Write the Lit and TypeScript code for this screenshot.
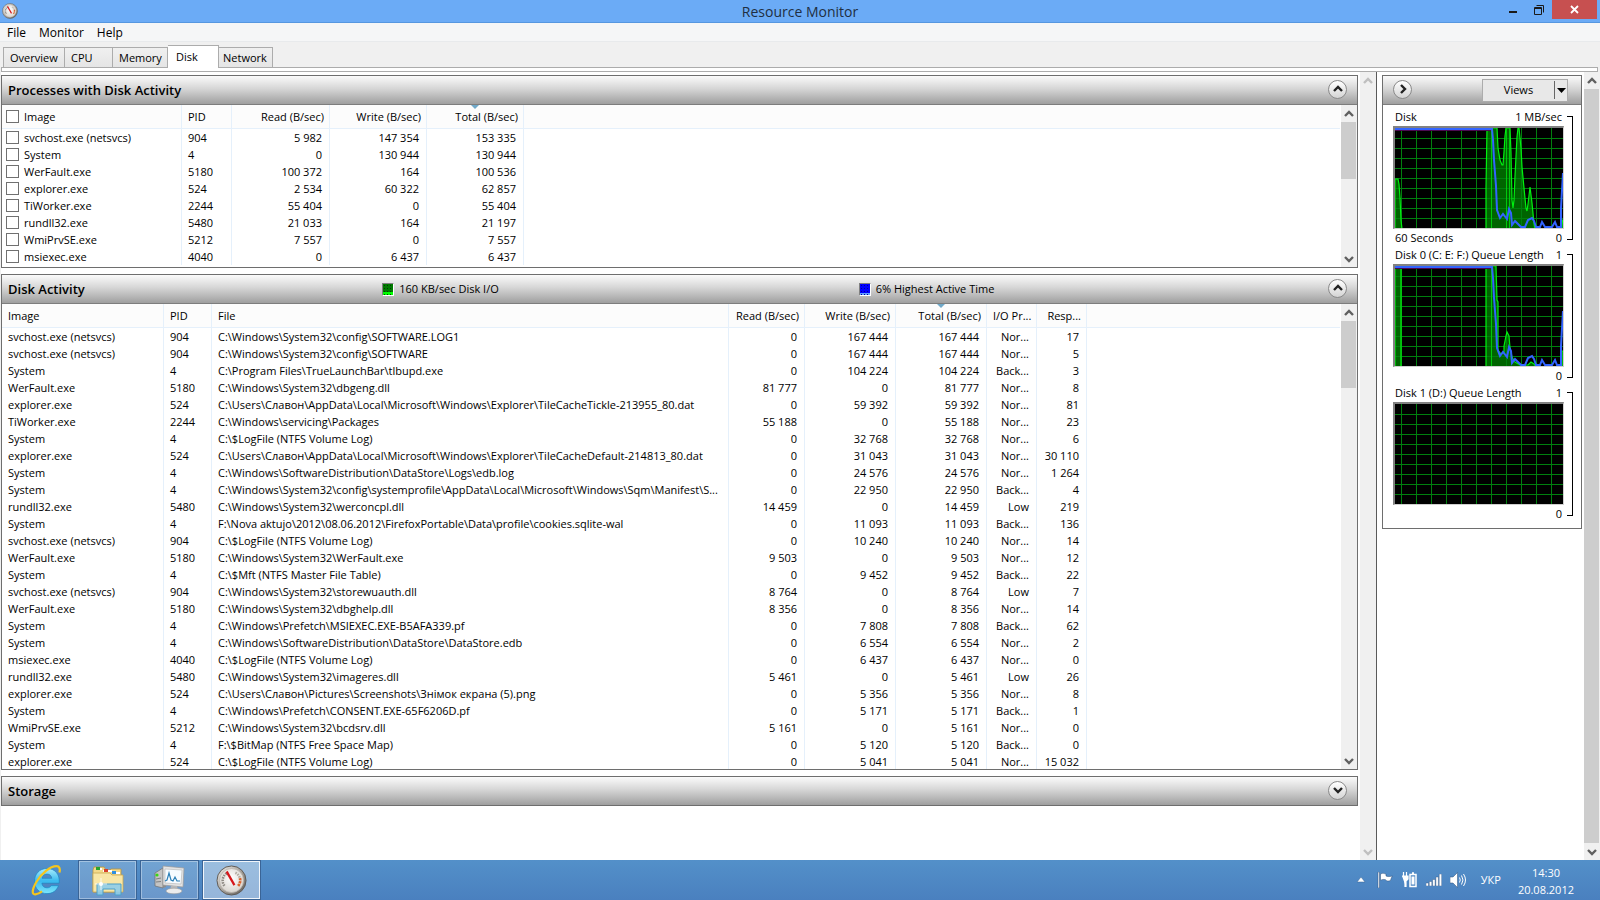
import { LitElement, html, svg, css } from "lit";
import { customElement, property } from "lit/decorators.js";
import { classMap } from "lit/directives/class-map.js";
import { styleMap } from "lit/directives/style-map.js";

type Column = { label: string; width: number; right?: boolean; sorted?: boolean };

const PROCESS_COLUMNS: Column[] = [
  { label: "Image", width: 180 },
  { label: "PID", width: 50 },
  { label: "Read (B/sec)", width: 98, right: true },
  { label: "Write (B/sec)", width: 97, right: true },
  { label: "Total (B/sec)", width: 97, right: true, sorted: true },
];

const PROCESSES: string[][] = [
  ["svchost.exe (netsvcs)", "904", "5 982", "147 354", "153 335"],
  ["System", "4", "0", "130 944", "130 944"],
  ["WerFault.exe", "5180", "100 372", "164", "100 536"],
  ["explorer.exe", "524", "2 534", "60 322", "62 857"],
  ["TiWorker.exe", "2244", "55 404", "0", "55 404"],
  ["rundll32.exe", "5480", "21 033", "164", "21 197"],
  ["WmiPrvSE.exe", "5212", "7 557", "0", "7 557"],
  ["msiexec.exe", "4040", "0", "6 437", "6 437"],
];

const ACTIVITY_COLUMNS: Column[] = [
  { label: "Image", width: 162 },
  { label: "PID", width: 48 },
  { label: "File", width: 517 },
  { label: "Read (B/sec)", width: 76, right: true },
  { label: "Write (B/sec)", width: 91, right: true },
  { label: "Total (B/sec)", width: 91, right: true, sorted: true },
  { label: "I/O Pr...", width: 50, right: true },
  { label: "Resp...", width: 50, right: true },
];

const ACTIVITY: string[][] = [
  ["svchost.exe (netsvcs)", "904", "C:\\Windows\\System32\\config\\SOFTWARE.LOG1", "0", "167 444", "167 444", "Nor...", "17"],
  ["svchost.exe (netsvcs)", "904", "C:\\Windows\\System32\\config\\SOFTWARE", "0", "167 444", "167 444", "Nor...", "5"],
  ["System", "4", "C:\\Program Files\\TrueLaunchBar\\tlbupd.exe", "0", "104 224", "104 224", "Back...", "3"],
  ["WerFault.exe", "5180", "C:\\Windows\\System32\\dbgeng.dll", "81 777", "0", "81 777", "Nor...", "8"],
  ["explorer.exe", "524", "C:\\Users\\Славон\\AppData\\Local\\Microsoft\\Windows\\Explorer\\TileCacheTickle-213955_80.dat", "0", "59 392", "59 392", "Nor...", "81"],
  ["TiWorker.exe", "2244", "C:\\Windows\\servicing\\Packages", "55 188", "0", "55 188", "Nor...", "23"],
  ["System", "4", "C:\\$LogFile (NTFS Volume Log)", "0", "32 768", "32 768", "Nor...", "6"],
  ["explorer.exe", "524", "C:\\Users\\Славон\\AppData\\Local\\Microsoft\\Windows\\Explorer\\TileCacheDefault-214813_80.dat", "0", "31 043", "31 043", "Nor...", "30 110"],
  ["System", "4", "C:\\Windows\\SoftwareDistribution\\DataStore\\Logs\\edb.log", "0", "24 576", "24 576", "Nor...", "1 264"],
  ["System", "4", "C:\\Windows\\System32\\config\\systemprofile\\AppData\\Local\\Microsoft\\Windows\\Sqm\\Manifest\\S...", "0", "22 950", "22 950", "Back...", "4"],
  ["rundll32.exe", "5480", "C:\\Windows\\System32\\werconcpl.dll", "14 459", "0", "14 459", "Low", "219"],
  ["System", "4", "F:\\Nova aktujo\\2012\\08.06.2012\\FirefoxPortable\\Data\\profile\\cookies.sqlite-wal", "0", "11 093", "11 093", "Back...", "136"],
  ["svchost.exe (netsvcs)", "904", "C:\\$LogFile (NTFS Volume Log)", "0", "10 240", "10 240", "Nor...", "14"],
  ["WerFault.exe", "5180", "C:\\Windows\\System32\\WerFault.exe", "9 503", "0", "9 503", "Nor...", "12"],
  ["System", "4", "C:\\$Mft (NTFS Master File Table)", "0", "9 452", "9 452", "Back...", "22"],
  ["svchost.exe (netsvcs)", "904", "C:\\Windows\\System32\\storewuauth.dll", "8 764", "0", "8 764", "Low", "7"],
  ["WerFault.exe", "5180", "C:\\Windows\\System32\\dbghelp.dll", "8 356", "0", "8 356", "Nor...", "14"],
  ["System", "4", "C:\\Windows\\Prefetch\\MSIEXEC.EXE-B5AFA339.pf", "0", "7 808", "7 808", "Back...", "62"],
  ["System", "4", "C:\\Windows\\SoftwareDistribution\\DataStore\\DataStore.edb", "0", "6 554", "6 554", "Nor...", "2"],
  ["msiexec.exe", "4040", "C:\\$LogFile (NTFS Volume Log)", "0", "6 437", "6 437", "Nor...", "0"],
  ["rundll32.exe", "5480", "C:\\Windows\\System32\\imageres.dll", "5 461", "0", "5 461", "Low", "26"],
  ["explorer.exe", "524", "C:\\Users\\Славон\\Pictures\\Screenshots\\Знімок екрана (5).png", "0", "5 356", "5 356", "Nor...", "8"],
  ["System", "4", "C:\\Windows\\Prefetch\\CONSENT.EXE-65F6206D.pf", "0", "5 171", "5 171", "Back...", "1"],
  ["WmiPrvSE.exe", "5212", "C:\\Windows\\System32\\bcdsrv.dll", "5 161", "0", "5 161", "Nor...", "0"],
  ["System", "4", "F:\\$BitMap (NTFS Free Space Map)", "0", "5 120", "5 120", "Back...", "0"],
  ["explorer.exe", "524", "C:\\$LogFile (NTFS Volume Log)", "0", "5 041", "5 041", "Nor...", "15 032"],
];

const ACTIVE_TIME =
  "0,1 97,1 98,12 99,32 101,58 102,82 105,90 108,86 112,91 114,81 116,85 117,97 120,93 123,96 126,99 130,99 133,92 137,90 139,93 141,99 145,99 147,94 150,99 157,99 160,94 162,99 166,99 166,80 168,45";

const CHARTS = [
  {
    title: "Disk", max: "1 MB/sec", foot: "60 Seconds",
    areas: [
      "0,101 0,51 3,51 4,56 5,70 6,92 7,101",
      "91,101 91,60 92,0 102,0 103,20 105,32 107,37 108,37 109,24 110,8 111,0 115,0 116,25 117,72 118,80 119,72 120,48 122,9 123,0 124,0 126,20 127,39 129,60 131,80 132,83 133,76 135,59 137,75 139,96 140,101",
      "166,101 167,92 168,92 168,101",
    ],
    marks: [96, 111, 114], line: true,
  },
  {
    title: "Disk 0 (C: E: F:) Queue Length", max: "1", foot: "",
    areas: [
      "0,101 0,0 6,0 6,101",
      "91,101 91,0 101,0 102,34 103,36 103,84 106,88 109,86 109,80 111,70 112,66 114,70 115,82 117,91 120,96 125,99 133,99 136,96 139,98 141,101",
      "166,101 166,85 168,85 168,101",
    ],
    marks: [96], line: true,
  },
  { title: "Disk 1 (D:) Queue Length", max: "1", foot: "", areas: [], marks: [], line: false },
];

const chevron = (dir: "up" | "down" | "right") => {
  const d = { up: "M1 7 5 3l4 4", down: "M1 3l4 4 4-4", right: "M3 1l4 4-4 4" }[dir];
  return html`<svg class="chevron" viewBox="0 0 10 10" width="10" height="10" aria-hidden="true">
    <path d=${d} fill="none" stroke="currentColor" stroke-width="2.4"></path>
  </svg>`;
};

const gauge = (size: number) => html`<svg width=${size} height=${size} viewBox="0 0 32 32" aria-hidden="true">
  <defs>
    <linearGradient id="rim" x1="0" y1="0" x2="1" y2="1">
      <stop offset="0" stop-color="#f4f2ee"></stop><stop offset=".5" stop-color="#a9a49d"></stop><stop offset="1" stop-color="#5a5651"></stop>
    </linearGradient>
    <radialGradient id="face" cx=".5" cy=".4" r=".6">
      <stop offset="0" stop-color="#ffffff"></stop><stop offset="1" stop-color="#d9d5cf"></stop>
    </radialGradient>
  </defs>
  <circle cx="16" cy="16" r="15" fill="url(#rim)" stroke="#5d5853" stroke-width="1"></circle>
  <circle cx="16" cy="16" r="12.4" fill="url(#face)" stroke="#b9b4ad" stroke-width=".8"></circle>
  <path d="M8.700 21.500a9 9 0 0 1 3-13.400" fill="none" stroke="#8d8983" stroke-width="2.600" stroke-dasharray="1.600 1"></path>
  <path d="M20 8a9 9 0 0 1 4.600 5.500" fill="none" stroke="#b4aca2" stroke-width="2.600" stroke-dasharray="1.600 1"></path>
  <path d="M24.700 13.500a9 9 0 0 1-1.900 8.200" fill="none" stroke="#d9632d" stroke-width="2.800" stroke-dasharray="2.400 .7"></path>
  <path d="M10 7.500 12 6l8 14.200-2 1.200z" fill="#d6161b"></path>
</svg>`;

@customElement("rm-scrollbar")
class ScrollBar extends LitElement {
  @property({ type: Number }) thumb = 0;
  @property({ type: Boolean }) fill = false;
  @property({ type: Boolean }) disabled = false;
  static styles = css`
    :host { display: flex; flex-direction: column; background: #f0f0f0; color: #606060; min-height: 0; }
    button { flex: none; height: 17px; border: 0; padding: 0; margin-right: 1px; background: none; color: inherit; display: grid; place-items: center; }
    button:disabled { color: #bfbfbf; }
    .track { flex: 1; min-height: 0; margin-right: 1px; }
    .thumb { background: #cdcdcd; }
    .full { height: 100%; }
  `;
  render() {
    return html`<button aria-label="Scroll up" ?disabled=${this.disabled}>${chevron("up")}</button>
      <div class="track">
        ${this.fill
          ? html`<div class="thumb full"></div>`
          : html`<div class="thumb" style=${styleMap({ height: `${this.thumb}px` })}></div>`}
      </div>
      <button aria-label="Scroll down" ?disabled=${this.disabled}>${chevron("down")}</button>`;
  }
}

@customElement("rm-chart")
class Chart extends LitElement {
  @property({ attribute: false }) data: any;
  static styles = css`
    :host { display: grid; grid-template-columns: 171px 1fr; font: 11px/18px "Open Sans", sans-serif; color: #000; }
    .row { display: flex; justify-content: space-between; padding: 0 2px; height: 18px; white-space: nowrap; }
    .foot { height: 17px; line-height: 17px; }
    .plot { display: block; border: 2px solid #828282; border-right: 1px solid #d0d0d0; border-bottom: 1px solid #d0d0d0; background: #000; width: 168px; height: 100px; }
    .bracket { border: 1px solid #000; border-left: 0; width: 5px; margin: 8px 0 6px 3px; }
  `;
  render() {
    const { title, max, foot, areas, marks, line } = this.data;
    const vs = Array.from({ length: 11 }, (_, i) => 6 + i * 15);
    const hs = Array.from({ length: 10 }, (_, i) => 10 + i * 10);
    return html`<div>
        <div class="row"><span>${title}</span><span>${max}</span></div>
        <svg class="plot" viewBox="0 0 168 100" preserveAspectRatio="none" role="img" aria-label=${title}>
          ${areas.map((a: string) => svg`<polygon points=${a} fill="#006400" stroke="none"></polygon>`)}
          <g shape-rendering="crispEdges" fill="#007f0e">
            ${vs.map((x) => svg`<rect x=${x} y="0" width="1" height="100"></rect>`)}
            ${hs.map((y) => svg`<rect x="0" y=${y} width="168" height="1"></rect>`)}
          </g>
          ${areas.map((a: string) => svg`<polyline points=${a} fill="none" stroke="#00f010" stroke-width="1.200"></polyline>`)}
          ${marks.map((x: number) => svg`<rect x=${x} y="0" width="1" height="100" fill="#00c80c"></rect>`)}
          ${line
            ? svg`<rect x="0" y="2" width="96" height="1" fill="#4b0a50"></rect>
              <polyline points=${ACTIVE_TIME} fill="none" stroke="#3264ff" stroke-width="2"></polyline>`
            : null}
        </svg>
        <div class="row foot"><span>${foot}</span><span>0</span></div>
      </div>
      <div class="bracket"></div>`;
  }
}

@customElement("app-root")
class AppRoot extends LitElement {
  static styles = css`
    :host { display: flex; flex-direction: column; height: 100vh; overflow: hidden; background: #f0f0f0; color: #000; font: 11px/16px "Open Sans", "Noto Sans", sans-serif; }
    * { box-sizing: border-box; }
    button { font: inherit; color: inherit; border: 0; padding: 0; background: none; }
    svg { display: block; }

    .title { flex: none; height: 23px; display: grid; grid-template-columns: 1fr auto 1fr; background: #6babf6; border-bottom: 1px solid #5697e0; color: #1f2f42; }
    .title h1 { margin: 0; font-size: 14px; line-height: 23px; font-weight: 400; }
    .title .app { padding: 3px 2px; }
    .caption { display: flex; justify-content: flex-end; padding-right: 3px; }
    .caption button { width: 26px; height: 19px; display: grid; place-items: center; }
    .caption .close { width: 45px; background: #c75050; color: #fff; }

    .menu { flex: none; display: flex; height: 19px; background: #f5f6f7; border-bottom: 1px solid #e8eaec; padding-left: 7px; gap: 13px; font-size: 12px; }
    .menu button { line-height: 18px; padding-top: 1px; }

    .tabs { flex: none; display: flex; align-items: flex-end; height: 26px; padding-left: 3px; margin-bottom: -1px; z-index: 1; }
    .tabs button { height: 21px; border: 1px solid #acacac; border-left-width: 0; background: linear-gradient(#f0f0f0, #e5e5e5); text-align: left; padding: 0 0 0 6px; line-height: 20px; }
    .tabs button:first-child { border-left-width: 1px; }
    .tabs .on { height: 23px; background: #fff; border-bottom: 0; padding-left: 8px; }
    .tabs .on + button { padding-left: 4px; }
    .strip { flex: none; height: 5px; margin: 0 2px 0 1px; border: 1px solid #acacac; background: #fff; }

    .body { flex: 1; min-height: 0; display: flex; background: #fff; margin-left: 1px; }
    .panels { flex: 1; min-width: 0; display: flex; flex-direction: column; gap: 6px; padding: 3px 2px 54px 0; }
    .panel { flex: none; display: flex; flex-direction: column; border: 1px solid #6e6e6e; background: #fff; min-height: 0; }
    .grow { flex: 1; }
    .bar { flex: none; display: grid; grid-template-columns: 374fr 476fr 469fr 19px; align-items: center; height: 29px; padding: 0 10px 0 6px; background: linear-gradient(#fbfbfb, #d6d6d6 45%, #9f9f9f); border-bottom: 1px solid #7d7d7d; }
    .panel.closed .bar { border-bottom: 0; height: 28px; }
    .bar h2 { margin: 0; font-size: 13px; font-weight: 600; line-height: 20px; }
    .bar .round { grid-column: 4; }
    .legend { display: flex; align-items: center; gap: 5px; }
    .swatch { width: 12px; height: 13px; border: 1px solid #808080; border-right-color: #fff; border-bottom-color: #fff; }
    .io { background: radial-gradient(circle, #003c00 40%, transparent 45%) 0 0 / 3px 3px, linear-gradient(#007a00 70%, #00ff00 70%); }
    .time { background: radial-gradient(circle, #000090 40%, transparent 45%) 0 0 / 3px 3px, linear-gradient(#0000ff 82%, #60a0ff 82%); }
    .round { width: 19px; height: 19px; margin-bottom: 2px; border: 1px solid #8a8a8a; border-radius: 50%; background: linear-gradient(#fff, #d4d4d4); display: grid; place-items: center; color: #222; }

    .view { flex: 1; min-height: 0; display: flex; overflow: hidden; }
    .list { flex: 1; min-width: 0; overflow: hidden; padding-bottom: 2px; background: linear-gradient(#fcfcfc 23px, #e5f0fb 23px, #e5f0fb 24px, #fff 24px); margin-right: 1px; }
    rm-scrollbar { width: 16px; flex: none; }
    table { table-layout: fixed; width: 1px; border-collapse: separate; border-spacing: 0; line-height: 17px; }
    th, td { padding: 0 7px 0 6px; border-right: 1px solid #e5f0fb; white-space: nowrap; overflow: hidden; text-align: left; font-weight: 400; }
    th { height: 24px; padding-right: 5px; padding-bottom: 2px; position: relative; }
    td { height: 17px; }
    .right { text-align: right; }
    .sorted::before { content: ""; position: absolute; top: 0; left: calc(50% - 4px); border: 4px solid transparent; border-top-color: #6fa8c8; border-bottom: 0; }
    .pick { display: flex; align-items: center; gap: 5px; margin-left: -2px; }
    .pick input { appearance: none; margin: 0; width: 13px; height: 13px; border: 1px solid #707070; background: #fff; flex: none; }

    .outer { border-right: 1px solid #5a5a5a; width: 17px; }
    .side { width: 207px; flex: none; padding: 3px 2px 0 5px; }
    .side .bar { display: flex; justify-content: space-between; padding: 0 13px 0 10px; }
    .views { display: flex; align-items: center; width: 86px; height: 23px; border: 1px solid #acacac; background: #e8e8e8; }
    .views span { flex: 1; text-align: center; }
    .views i { height: 18px; border-left: 1px solid #666; width: 13px; display: grid; place-items: center; }
    .charts { padding: 3px 0 6px 10px; display: grid; }

    .taskbar { flex: none; height: 40px; display: flex; background: linear-gradient(#5390c9, #4a80bf); color: #fff; padding-left: 16px; gap: 3px; }
    .task { width: 59px; height: 40px; display: grid; place-items: center; border: 1px solid transparent; }
    .run { border: 1px solid #3a6496; background: rgba(255, 255, 255, 0.18); box-shadow: inset 0 0 0 1px rgba(255, 255, 255, 0.35); }
    .active { background: rgba(255, 255, 255, 0.42); box-shadow: inset 0 0 0 1px rgba(255, 255, 255, 0.85); }
    .tray { margin-left: auto; display: flex; align-items: center; padding-right: 26px; gap: 8px; }
    .tray .lang { padding: 0 9px 0 7px; }
    .clock { text-align: center; line-height: 17px; padding-top: 2px; }
  `;

  private table(columns: Column[], rows: string[][], pick: boolean, label: string) {
    const cell = (text: string, i: number) =>
      pick && i === 0 ? html`<label class="pick"><input type="checkbox" />${text}</label>` : text;
    return html`<div class="list">
      <table aria-label=${label}>
        <colgroup>${columns.map((c) => html`<col style=${styleMap({ width: `${c.width}px` })} />`)}</colgroup>
        <thead>
          <tr>${columns.map((c, i) => html`<th class=${classMap({ right: !!c.right, sorted: !!c.sorted })}>${cell(c.label, i)}</th>`)}</tr>
        </thead>
        <tbody>
          ${rows.map((r) => html`<tr>${r.map((t, i) => html`<td class=${classMap({ right: !!columns[i].right })}>${cell(t, i)}</td>`)}</tr>`)}
        </tbody>
      </table>
    </div>`;
  }

  render() {
    const tabs: [string, number][] = [["Overview", 62], ["CPU", 48], ["Memory", 55], ["Disk", 51], ["Network", 54]];
    return html`
      <header class="title">
        <div class="app">${gauge(16)}</div>
        <h1>Resource Monitor</h1>
        <div class="caption">
          <button aria-label="Minimize"><svg width="8" height="8"><rect y="5" width="8" height="2" fill="#1a1a1a"></rect></svg></button>
          <button aria-label="Restore"><svg width="10" height="10" fill="none" stroke="#1a1a1a"><path d="M.5 2.500h7v7h-7zM.5 3.500h7M2.500 .5h7v7"></path></svg></button>
          <button class="close" aria-label="Close"><svg width="9" height="9"><path d="m1 1 7 7M8 1 1 8" stroke="#fff" stroke-width="1.800"></path></svg></button>
        </div>
      </header>
      <nav class="menu"><button>File</button><button>Monitor</button><button>Help</button></nav>
      <div class="tabs" role="tablist">
        ${tabs.map(([t, w]) => html`<button role="tab" class=${classMap({ on: t === "Disk" })} aria-selected=${t === "Disk"} style=${styleMap({ width: `${w}px` })}>${t}</button>`)}
      </div>
      <div class="strip"></div>
      <main class="body">
        <div class="panels">
          <section class="panel">
            <div class="bar"><h2>Processes with Disk Activity</h2><button class="round" aria-label="Collapse">${chevron("up")}</button></div>
            <div class="view">${this.table(PROCESS_COLUMNS, PROCESSES, true, "Processes with Disk Activity")}<rm-scrollbar .thumb=${57}></rm-scrollbar></div>
          </section>
          <section class="panel grow">
            <div class="bar">
              <h2>Disk Activity</h2>
              <div class="legend"><span class="swatch io"></span>160 KB/sec Disk I/O</div>
              <div class="legend"><span class="swatch time"></span>6% Highest Active Time</div>
              <button class="round" aria-label="Collapse">${chevron("up")}</button>
            </div>
            <div class="view">${this.table(ACTIVITY_COLUMNS, ACTIVITY, false, "Disk Activity")}<rm-scrollbar .thumb=${67}></rm-scrollbar></div>
          </section>
          <section class="panel closed">
            <div class="bar"><h2>Storage</h2><button class="round" aria-label="Expand">${chevron("down")}</button></div>
          </section>
        </div>
        <rm-scrollbar class="outer" disabled></rm-scrollbar>
        <aside class="side">
          <div class="panel">
            <div class="bar">
              <button class="round" aria-label="Hide graphs">${chevron("right")}</button>
              <button class="views"><span>Views</span><i><svg width="9" height="5"><path d="M0 0h9L4.500 5z"></path></svg></i></button>
            </div>
            <div class="charts">${CHARTS.map((c) => html`<rm-chart .data=${c}></rm-chart>`)}</div>
          </div>
        </aside>
        <rm-scrollbar fill></rm-scrollbar>
      </main>
      <footer class="taskbar">
        <button class="task" aria-label="Internet Explorer">
          <svg width="32" height="32" viewBox="0 0 32 32">
            <defs><linearGradient id="ie" x1="0" y1="0" x2="0" y2="1"><stop offset="0" stop-color="#a8ecfc"></stop><stop offset=".5" stop-color="#39b9ef"></stop><stop offset="1" stop-color="#7fe6fb"></stop></linearGradient></defs>
            <path fill="url(#ie)" stroke="#1b86c4" stroke-width=".7" fill-rule="evenodd" d="M17 4.500C9.500 4.500 4.500 10 4.500 17.200 4.500 24.500 9.800 29.600 17 29.600c5.600 0 9.800-3 11.500-8h-7.300c-.9 1.500-2.300 2.200-4.200 2.200-2.900 0-4.900-1.700-5.100-4.700h17.300c.9-8.500-4-14.600-12.200-14.600zM12 14.300c.6-2.700 2.300-4.200 5-4.200 2.600 0 4.400 1.500 4.800 4.200z"></path>
            <path d="M29.500 8.500c.9-3.600 0-6.300-3-6.300-6.200 0-15.300 7.300-20 15.600C2 25.500 1.400 30.700 5.400 30.300c2.200-.2 4.500-1.300 6.600-2.900" fill="none" stroke="#f6c51c" stroke-width="2.200"></path>
          </svg>
        </button>
        <button class="task run" aria-label="File Explorer">
          <svg width="34" height="32" viewBox="0 0 34 32">
            <path d="M3 3h10l2 3h4l1-1h10v6l1 1v16H2V6z" fill="#f3d98a" stroke="#b9963f" stroke-width=".8"></path>
            <path d="M5 4h6v2H5z" fill="#fff"></path><path d="M5 3h4v3H5z" fill="#28a52c"></path>
            <path d="M12 6h9v2h-9z" fill="#fff"></path><path d="M13 5h4v3h-4z" fill="#d6402b"></path>
            <path d="M21 8h8v2h-8z" fill="#fff"></path><path d="M21 7h4v3h-4z" fill="#2f8fe0"></path>
            <path d="M2 9h17l2 2h11v17H2z" fill="#f8e6a6" stroke="#c9a850" stroke-width=".8"></path>
            <path d="M6 31V20h24v11h-6v-6H12v6z" fill="#8fcdea" fill-opacity=".9" stroke="#4d9fc9"></path>
            <path d="M10 14v12M4 20h12" stroke="#fff" stroke-opacity=".8"></path>
            <circle cx="10" cy="20" r="2" fill="#fff"></circle>
          </svg>
        </button>
        <button class="task run" aria-label="Task Manager">
          <svg width="32" height="30" viewBox="0 0 32 30">
            <path d="m1 8 8-5v20l-8-2z" fill="#c4c4c4" stroke="#6e6e6e" stroke-width=".7"></path>
            <path d="m9 3 3-1v20l-3 1z" fill="#8d8d8d"></path>
            <circle cx="3" cy="10" r="1.600" fill="#36d813"></circle>
            <path d="M2 14l5-1M2 17l5-.5" stroke="#808080"></path>
            <path d="m9 1 21 2-1 19-20-2z" fill="#e3e3e3" stroke="#9a9a9a" stroke-width=".7"></path>
            <path d="m11 4 17 1-1 14-16-1z" fill="#f6fbff" stroke="#b3b3b3" stroke-width=".6"></path>
            <path d="m11 16 2-1 2-7 2 7 2 1 2-4 2 4 3 0" fill="none" stroke="#2d80b8" stroke-width="1.200"></path>
            <path d="M17 21h6l1 4h-8z" fill="#b8b8b8"></path>
            <ellipse cx="20" cy="26" rx="8" ry="2.800" fill="#ececec" stroke="#9c9c9c" stroke-width=".6"></ellipse>
          </svg>
        </button>
        <button class="task run active" aria-label="Resource Monitor">${gauge(31)}</button>
        <div class="tray">
          <svg width="12" height="6"><path d="M0 5h8L4 0z" fill="#fff" stroke="#3a6496" stroke-width=".5"></path></svg>
          <svg width="17" height="16" viewBox="0 0 17 16"><path d="M1 0h1.500v16H1zM3.500 2c3-1.500 4 0 5.500 0v2c2 1 4 .5 6.500 0-1 1.500-1.500 2.500-2 4.500-2.500 1-4 .5-5-.8-1.500-.3-3-.5-5 .5z" fill="#fff" stroke="#2d4f7a" stroke-width=".5"></path></svg>
          <svg width="16" height="16" viewBox="0 0 16 16"><path d="M1.500 0v4M4.500 0v4M0 4h6v3L4 9v6M3 8v7" stroke="#fff" fill="#fff" stroke-width="1.200"></path><path d="M8 2.500h6v12H8zM10 1h2" stroke="#fff" stroke-width="1.500" fill="none"></path><path d="M9.500 4.500h3v8h-3z" fill="#fff"></path></svg>
          <svg width="16" height="12" fill="#fff" stroke="#2d4f7a" stroke-width=".4"><path d="M0 9h2.500v3H0zM3.300 7.500h2.500V12H3.300zM6.600 5.500h2.500V12H6.600zM9.900 3h2.500v9H9.900zM13.200 0h2.500v12h-2.500z"></path></svg>
          <svg width="16" height="16" viewBox="0 0 16 16"><path d="M0 5h3l4.500-4.500v15L3 11H0z" fill="#fff" stroke="#2d4f7a" stroke-width=".5"></path><path d="M9.500 5.500q1.500 2.500 0 5M11.500 3.500q3 4.500 0 9M13.500 2q4 6 0 12" fill="none" stroke="#fff"></path></svg>
          <span class="lang">УКР</span>
          <div class="clock">14:30<br />20.08.2012</div>
        </div>
      </footer>
    `;
  }
}
